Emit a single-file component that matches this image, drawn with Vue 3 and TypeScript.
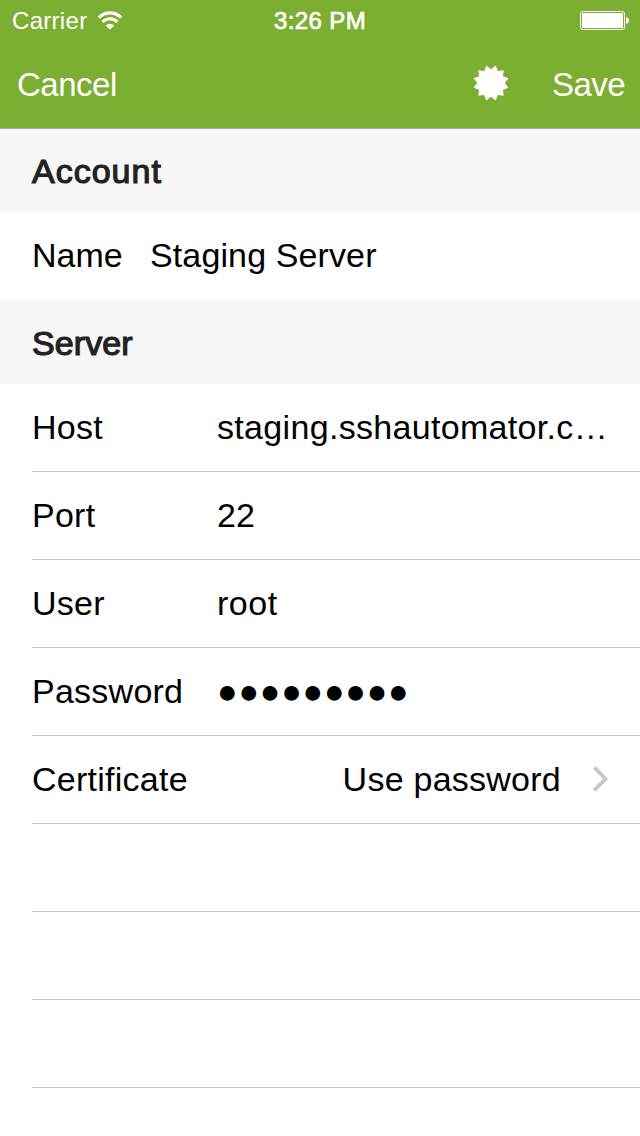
<script setup lang="ts">
interface Field {
  label: string
  value: string
  kind: string
}

const fields: Field[] = [
  { label: 'Host', value: 'staging.sshautomator.c…', kind: 'host' },
  { label: 'Port', value: '22', kind: 'plain' },
  { label: 'User', value: 'root', kind: 'login' },
  { label: 'Password', value: '●●●●●●●●●', kind: 'dots' },
]

const emptyRows = 4

// Twelve-pointed badge: tips and valleys alternate every 15 degrees.
const burst: string = Array.from({ length: 24 }, (_, i) => {
  const angle = ((i * 15) * Math.PI) / 180
  const r = i % 2 === 0 ? 12.9 : 17.1
  return `${(18 + r * Math.cos(angle)).toFixed(2)},${(18 + r * Math.sin(angle)).toFixed(2)}`
}).join(' ')
</script>

<template>
  <main class="screen">
    <header class="header">
      <div class="status">
        <div class="carrier">
          <span class="carrier-name">Carrier</span>
          <svg class="wifi" width="26" height="20" viewBox="0 0 26 20">
            <path d="M1.9 6.7A15.4 15.4 0 0 1 24.1 6.7" fill="none" stroke="#fff" stroke-width="3.2" />
            <path d="M5.6 10.9A10.2 10.2 0 0 1 20.4 10.9" fill="none" stroke="#fff" stroke-width="3" />
            <path d="M8.8 14.6A5.8 5.8 0 0 1 17.2 14.6L13 18.8Z" fill="#fff" />
          </svg>
        </div>
        <span class="time">3:26 PM</span>
        <svg class="battery" width="50" height="20" viewBox="0 0 50 20">
          <rect x="0.5" y="0.5" width="44" height="18" rx="2.5" fill="none" stroke="#fff" />
          <rect x="2" y="2" width="41" height="15" rx="1" fill="#fff" />
          <path d="M46 6.2Q49 6.5 49 9.5T46 12.8Z" fill="#fff" />
        </svg>
      </div>
      <nav class="nav">
        <span class="action cancel">Cancel</span>
        <svg class="burst" width="36" height="36" viewBox="0 0 36 36">
          <polygon :points="burst" fill="#fff" stroke="#fff" stroke-width="1.2" stroke-linejoin="round" />
        </svg>
        <span class="action save">Save</span>
      </nav>
    </header>

    <h2 class="section account"><span>Account</span></h2>
    <div class="name-row">
      <span class="name-label">Name</span>
      <span class="name-value">Staging Server</span>
    </div>

    <h2 class="section server"><span>Server</span></h2>
    <div v-for="f in fields" :key="f.label" class="row">
      <span class="label">{{ f.label }}</span>
      <span class="value" :class="f.kind">{{ f.value }}</span>
    </div>
    <div class="row">
      <span class="label">Certificate</span>
      <span class="choice">Use password</span>
      <svg class="chevron" width="18" height="28" viewBox="0 0 18 28">
        <path d="M2.2 2.4L13.6 13.9L2.2 25.4" fill="none" stroke="#c7c7cc" stroke-width="3.8" />
      </svg>
    </div>
    <div v-for="n in emptyRows" :key="n" class="row"></div>
  </main>
</template>

<style>
body {
  margin: 0;
  background: #fff;
}
</style>

<style scoped>
.screen {
  width: 640px;
  height: 1136px;
  overflow: hidden;
  background: #fff;
  color: #000;
  font-family: "Liberation Sans", Arial, sans-serif;
  font-size: 34px;
  line-height: 40px;
  white-space: nowrap;
}
.header {
  box-sizing: border-box;
  height: 129px;
  background: #7cae31;
  border-bottom: 1px solid #acacac;
  color: #fff;
}
.status {
  display: grid;
  grid-template-columns: 1fr auto 1fr;
  align-items: center;
  box-sizing: border-box;
  height: 42px;
  padding: 0 10px 0 12px;
  font-size: 24px;
}
.carrier {
  display: flex;
  align-items: center;
}
.carrier-name {
  width: 85px;
  letter-spacing: 0.3px;
}
.wifi {
  margin-top: -1px;
}
.time {
  margin-right: 2px;
  letter-spacing: 0.4px;
  -webkit-text-stroke: 0.7px #fff;
}
.battery {
  justify-self: end;
}
.nav {
  display: flex;
  align-items: center;
  height: 86px;
  padding: 0 15px 0 17px;
}
.action {
  font-size: 33px;
  letter-spacing: -0.5px;
}
.cancel {
  flex: 1;
}
.save {
  width: 73px;
}
.burst {
  margin-right: 43px;
  margin-bottom: 4px;
}
.section {
  display: flex;
  align-items: center;
  height: 84px;
  margin: 0;
  padding-left: 32px;
  background: #f7f7f7;
  color: #222;
  font-size: 34px;
  font-weight: 400;
  letter-spacing: 1px;
  -webkit-text-stroke: 1.2px #222;
}
.section.account {
  height: 83px;
}
.section.server {
  box-sizing: border-box;
  padding-top: 2px;
  letter-spacing: 0.1px;
}
.name-row {
  display: flex;
  align-items: center;
  box-sizing: border-box;
  height: 88px;
  padding-bottom: 2px;
  padding-left: 32px;
}
.name-label {
  width: 118px;
}
.name-value {
  letter-spacing: 0.12px;
}
.row {
  display: flex;
  align-items: center;
  box-sizing: border-box;
  height: 88px;
  margin-left: 32px;
  padding-right: 30px;
  padding-bottom: 1px;
  border-bottom: 1px solid #c8c7cc;
}
.label {
  width: 185px;
  letter-spacing: 0.25px;
}
.host {
  letter-spacing: 0.32px;
}
.login {
  letter-spacing: 0.5px;
}
.dots {
  letter-spacing: 0.85px;
}
.choice {
  flex: 1;
  text-align: right;
  letter-spacing: 0.25px;
}
.chevron {
  margin-left: 31px;
}
</style>
